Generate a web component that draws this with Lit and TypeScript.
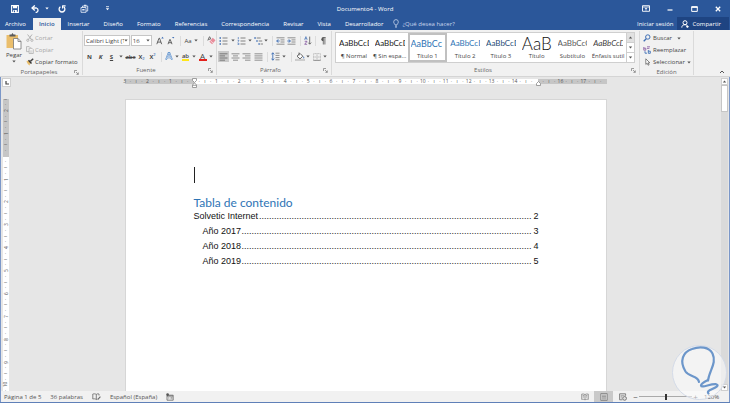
import { LitElement, html, svg, css, TemplateResult, SVGTemplateResult } from "lit";
import { customElement, state } from "lit/decorators.js";
import { classMap } from "lit/directives/class-map.js";

const BLUE = "#2b579a";
const INK = "#444";
const ACCENT = "#3f6fb5";

/** Wraps vector content in a pixel-sized icon. */
const icon = (w: number, h: number, body: SVGTemplateResult): TemplateResult =>
  html`<svg width=${w} height=${h} viewBox="0 0 ${w} ${h}" fill="none" aria-hidden="true">${body}</svg>`;

const caret = icon(4, 3, svg`<path d="M0.3 0.5h3.4L2 2.5z" fill="#555"/>`);

const icons = {
  save: icon(8, 8, svg`<path d="M.6.6h6.8v6.8H.6z" stroke="#fff" stroke-width="1.1"/><path d="M2 .6h4v2.600H2zM2.200 5h3.600v2.400H2.200z" fill="#fff"/><path d="M3 5.600h1v1.600H3z" fill="${BLUE}"/>`),
  undo: icon(9, 8, svg`<path d="M1.400 3h4a2.300 2.300 0 0 1 0 4.400H4.600" stroke="#fff" stroke-width="1.300"/><path d="M3.800.4L1 3l2.800 2.600" stroke="#fff" stroke-width="1.300"/>`),
  redo: icon(8, 8, svg`<path d="M2.400 1.700a2.900 2.900 0 1 0 3.200 0" stroke="#fff" stroke-width="1.300"/><path d="M4.400.8h3.200M4.600.6v3" stroke="#fff" stroke-width="1.200"/>`),
  touch: icon(9, 9, svg`<path d="M1 3.500h5v4.800H1zM2.500 3.500V2h5.200v5H6" stroke="#dfe7f4" stroke-width=".9"/><path d="M4 .8h2.400v1.400H4zM2.200 5h2.400v1.600H2.200z" fill="#dfe7f4"/>`),
  more: icon(5, 5, svg`<path d="M1 .7h3" stroke="#fff" stroke-width=".8"/><path d="M.8 2.200h3.400L2.500 4.200z" fill="#fff"/>`),
  ribbon: icon(8, 7, svg`<path d="M.5.7h7v5.600h-7z" stroke="#fff" stroke-width=".9"/><path d="M.5 2h7" stroke="#fff" stroke-width=".8"/><path d="M4 5.600V3M2.900 4L4 2.900 5.100 4" stroke="#fff" stroke-width=".8"/>`),
  min: icon(6, 6, svg`<path d="M.5 4h5" stroke="#fff" stroke-width="1.200"/>`),
  max: icon(7, 6, svg`<path d="M.7.7h5.600v4.700H.7z" stroke="#fff"/><path d="M.5 1.200h6" stroke="#fff" stroke-width="1.400"/>`),
  close: icon(6, 6, svg`<path d="M.8.8l4.400 4.400M5.200.8L.8 5.200" stroke="#fff" stroke-width="1.300"/>`),
  bulb: icon(6, 9, svg`<path d="M2 6C2 5 .7 4.500.7 2.900a2.300 2.300 0 0 1 4.600 0C5.300 4.500 4 5 4 6zM2 7.200h2M2.300 8.300h1.400" stroke="#c9d6ec" stroke-width=".8"/>`),
  person: icon(8, 8, svg`<circle cx="4" cy="2.700" r="2" stroke="#fff" stroke-width="1"/><path d="M.8 7.600c0-1.800 1.200-2.900 3.200-2.900 1 0 1.600.3 2 .7M5 6.700h2.800M6.400 5.300v2.500" stroke="#fff" stroke-width="1"/>`),
  paste: icon(16, 17, svg`<path d="M.5 2h11.500v13H.5z" fill="#eabe6c"/><path d="M3.500 1.500h2L6.200.3h.6l.7 1.200h2v2h-6z" fill="#5b5b5b"/><path d="M7.500 5.500h4.500l3 3v7.500H7.500z" fill="#fff" stroke="#777" stroke-width=".8"/><path d="M12 5.500v3h3" stroke="#777" stroke-width=".8"/>`),
  cut: icon(8, 8, svg`<path d="M1.600.5l3.800 5M6 .5L2.400 5.500" stroke="#aaa" stroke-width=".9"/><circle cx="1.800" cy="6.300" r="1.100" stroke="#aaa" stroke-width=".8"/><circle cx="5.900" cy="6.300" r="1.100" stroke="#aaa" stroke-width=".8"/>`),
  copy: icon(8, 8, svg`<path d="M.5.6h2.700l1.200 1.200v3.800H.5z" fill="#eee" stroke="#b0b0b0" stroke-width=".8"/><path d="M3.100 2.300h2.900l1.300 1.300v3.900H3.100z" fill="#f6f6f6" stroke="#b0b0b0" stroke-width=".8"/><path d="M4 5h2.300M4 6.200h2.300" stroke="#b8b8b8" stroke-width=".6"/>`),
  brush: icon(8, 8, svg`<path d="M.5 3l2.500-.5 1.700 2.300-1.200 2.700C2.200 6.500 1 5 .5 3z" fill="#eabe6c"/><path d="M2.500 2.200l3 3.300" stroke="#333" stroke-width="1.400"/><path d="M4.300 3.400L7.200.8" stroke="#444" stroke-width="1.500"/>`),
  grow: icon(8, 9, svg`<path d="M.8 8.200L3 2.200h.5l2.200 6M1.600 6.100h3.300" stroke="${INK}" stroke-width=".8"/><path d="M5.300 2.400L6.500.8l1.200 1.600z" fill="${ACCENT}"/>`),
  shrink: icon(8, 9, svg`<path d="M1 8.200l1.800-4.700h.4L5 8.200M1.700 6.700h2.700" stroke="${INK}" stroke-width=".8"/><path d="M5 1h2.400L6.200 2.600z" fill="${ACCENT}"/>`),
  erase: icon(9, 9, svg`<path d="M.8 4.500L2.400.8h.4l1 2.400M1.400 3.300h2" stroke="${INK}" stroke-width=".7"/><path d="M5.700 1.800l2.800 2.500-3.400 3.900-2.700-2.400z" fill="#e88d9b"/><path d="M3.400 4.700l2.700 2.400" stroke="#fff" stroke-width=".6"/>`),
  effect: icon(8, 9, svg`<path d="M1 7.700L3.600.9h.8L7 7.700M2.100 5.500h3.800" stroke="#4f86c6" stroke-width="1.700"/><path d="M1 7.700L3.600.9h.8L7 7.700M2.100 5.500h3.800" stroke="#e9f2fb" stroke-width=".6"/>`),
  bullets: icon(9, 8, svg`<path d="M.5 1h1.500M.5 4h1.500M.5 7h1.500" stroke="${ACCENT}" stroke-width="1.400"/><path d="M3.500 1h5M3.500 4h5M3.500 7h5" stroke="#777" stroke-width=".9"/>`),
  numbers: icon(9, 8, svg`<path d="M1.300.1v1.900M.6 3.200h1.200v.9L.7 5M.6 6.200h1.300v1.500H.6" stroke="${ACCENT}" stroke-width=".7"/><path d="M3.500 1h5M3.500 4h5M3.500 7h5" stroke="#777" stroke-width=".9"/>`),
  levels: icon(9, 8, svg`<path d="M.3 1h1.500M2.300 4h1.400M4.400 7h1.400" stroke="${ACCENT}" stroke-width="1.300"/><path d="M2.700 1h4M4.700 4h3.500M6.600 7H9" stroke="#777" stroke-width=".9"/>`),
  outdent: icon(9, 8, svg`<path d="M.5.8h8M4.500 2.900h4M4.500 5h4M.5 7.200h8" stroke="#777" stroke-width=".8"/><path d="M3.600 4H.8M2.200 2.400L.7 4l1.500 1.600" stroke="${ACCENT}" stroke-width="1"/>`),
  indent: icon(9, 8, svg`<path d="M.5.8h8M4.500 2.900h4M4.500 5h4M.5 7.200h8" stroke="#777" stroke-width=".8"/><path d="M.4 4h2.800M1.900 2.400L3.400 4 1.900 5.600" stroke="${ACCENT}" stroke-width="1"/>`),
  sort: icon(8, 9, svg`<path d="M.6 3.700L1.900.6l1.300 3.100M1 2.800h1.800" stroke="${ACCENT}" stroke-width=".7"/><path d="M.7 5.300h2.300L.7 8.300h2.400" stroke="#8456a0" stroke-width=".8"/><path d="M5.700.6v7.500M4.200 6.600l1.500 1.600 1.500-1.600" stroke="#555" stroke-width=".8"/>`),
  pilcrow: icon(6, 8, svg`<path d="M3.300.5v7M4.900.5v7M2.600.5h3" stroke="#555" stroke-width=".8"/><path d="M3.300.3a1.900 1.900 0 0 0 0 3.900z" fill="#555"/>`),
  alignLeft: icon(9, 8, svg`<path d="M.5.8h8M.5 2.900h5.500M.5 5h8M.5 7.200h5.500" stroke="#666" stroke-width=".8"/>`),
  alignCenter: icon(9, 8, svg`<path d="M.5.8h8M2 2.900h5M.5 5h8M2 7.200h5" stroke="#777" stroke-width=".8"/>`),
  alignRight: icon(9, 8, svg`<path d="M.5.8h8M3 2.900h5.500M.5 5h8M3 7.200h5.500" stroke="#777" stroke-width=".8"/>`),
  justify: icon(9, 8, svg`<path d="M.5.8h8M.5 2.900h8M.5 5h8M.5 7.200h8" stroke="#777" stroke-width=".8"/>`),
  spacing: icon(9, 9, svg`<path d="M1.800.8v7.400M.4 2.400L1.800.8l1.400 1.600M.4 6.600l1.400 1.600 1.400-1.600" stroke="${ACCENT}" stroke-width=".9"/><path d="M4.500 1.200h4M4.500 3.400h4M4.500 5.600h4M4.500 7.800h4" stroke="#777" stroke-width=".8"/>`),
  fill: icon(10, 9, svg`<path d="M2 4.200L5 1.400l2.800 2.800L5 6.900z" fill="#fff" stroke="#555" stroke-width=".9"/><path d="M4 .5v3" stroke="#555" stroke-width=".8"/><path d="M8.700 4.300c.8 1.200.8 2 .1 2.100-.7 0-.7-1-.1-2.100z" fill="${ACCENT}"/><path d="M.5 7.400h9v1.200h-9z" fill="#fff" stroke="#999" stroke-width=".5"/>`),
  borders: icon(8, 8, svg`<path d="M.6.600h6.800v6.800H.6zM4 .6v6.800M.6 4h6.800" stroke="#999" stroke-width=".6" stroke-dasharray="1 .5"/><path d="M.4 7.400h7.200" stroke="#888" stroke-width=".8"/>`),
  find: icon(8, 8, svg`<circle cx="4.800" cy="3" r="2.200" stroke="${ACCENT}" stroke-width="1"/><path d="M3.200 4.700L.7 7.200" stroke="${ACCENT}" stroke-width="1.300"/>`),
  replace: icon(8, 8, svg`<path d="M.8 1v3.200h2v-2h-2M4 .8h3M4 2.400h2.400" stroke="#8456a0" stroke-width=".8"/><path d="M2 5.200v2h2M5.300 4v3.300h2V5.200h-2" stroke="${ACCENT}" stroke-width=".9"/>`),
  select: icon(8, 8, svg`<path d="M2.800.8v5.600l1.400-1.200.9 2 1-.4-.9-2h1.600z" fill="#fff" stroke="#555" stroke-width=".7"/>`),
  launcher: icon(5, 5, svg`<path d="M.5 3V.5H3M2 2l2.200 2.200M4.300 2.400v2H2.400" stroke="#777" stroke-width=".7"/>`),
  collapse: icon(6, 4, svg`<path d="M1 3l2-2 2 2" stroke="#555"/>`),
  proof: icon(9, 8, svg`<path d="M4.300 1.400C3.200.7 2 .7.800 1v5c1.200-.3 2.400-.3 3.500.5zM4.300 1.400C5.300.7 6 .7 7 1v1.500M4.300 6.500l1-.5" stroke="#666" stroke-width=".8"/><path d="M5.300 6.200l2.700-3 .8.700-2.700 3z" fill="#666"/>`),
  macro: icon(8, 8, svg`<path d="M1 2.200h6.200v5H1z" stroke="#666" stroke-width=".8"/><path d="M1 3h6" stroke="#666" stroke-width="1"/><circle cx="1.600" cy="1.600" r="1.300" fill="#555"/><path d="M4.500 4.500h2M4.500 5.700h2M2.300 4.500h1M2.300 5.700h1" stroke="#777" stroke-width=".6"/>`),
  read: icon(8, 8, svg`<path d="M4 1.500C3 .9 1.800.9.700 1.100v5.300C1.800 6.200 3 6.200 4 6.900 5 6.200 6.200 6.200 7.300 6.400V1.100C6.200.9 5 .9 4 1.500zv5.300M1.700 2.600h1.400M1.700 4h1.400M4.900 2.600h1.400M4.900 4h1.400" stroke="#777" stroke-width=".7"/>`),
  print: icon(8, 8, svg`<path d="M.8.6h6.400v6.800H.8z" fill="#ddd" stroke="#777" stroke-width=".8"/><path d="M2 2.200h4M2 3.500h4M2 4.800h4M2 6h4" stroke="#777" stroke-width=".6"/>`),
  web: icon(8, 8, svg`<path d="M3.500 6.800H.6V.8h6v2" stroke="#666" stroke-width=".8"/><path d="M1.600 2.400h4M1.600 3.700h2M1.600 5h1.600" stroke="#777" stroke-width=".6"/><circle cx="5.600" cy="5.400" r="1.900" fill="#ddd" stroke="#555" stroke-width=".7"/>`),
  up: icon(5, 3, svg`<path d="M.8 2.600h3.400L2.500.6z" fill="#555"/>`),
  down: icon(5, 3, svg`<path d="M.8.5h3.400L2.500 2.500z" fill="#555"/>`),
  tabStop: icon(4, 4, svg`<path d="M1 0v3h3" stroke="#444" stroke-width="1.200"/>`),
  knob: icon(5, 10, svg`<path d="M.5.500h4v2L2.500 4.500.5 2.500zM.5 7l2-2.200 2 2.200v2.500h-4zM.5 7.300h4" fill="#fff" stroke="#888" stroke-width=".8"/>`),
  knobEnd: icon(5, 5, svg`<path d="M.5 4.500V2.500l2-2 2 2v2z" fill="#fff" stroke="#888" stroke-width=".8"/>`),
};

interface StyleItem { name: string; kind: string; text: string; }

const STYLES: StyleItem[] = [
  { name: "¶ Normal", kind: "plain", text: "AaBbCcDd" },
  { name: "¶ Sin espa...", kind: "plain", text: "AaBbCcDd" },
  { name: "Título 1", kind: "h1", text: "AaBbCc" },
  { name: "Título 2", kind: "h2", text: "AaBbCcD" },
  { name: "Título 3", kind: "h3", text: "AaBbCcD" },
  { name: "Título", kind: "big", text: "AaB" },
  { name: "Subtítulo", kind: "second", text: "AaBbCcC" },
  { name: "Énfasis sutil", kind: "emph", text: "AaBbCcD" },
];

const TABS = ["Archivo", "Inicio", "Insertar", "Diseño", "Formato", "Referencias", "Correspondencia", "Revisar", "Vista", "Desarrollador"];

const TOC = [
  { text: "Solvetic Internet", page: 2, sub: false, dots: 109 },
  { text: "Año 2017", page: 3, sub: true, dots: 116 },
  { text: "Año 2018", page: 4, sub: true, dots: 116 },
  { text: "Año 2019", page: 5, sub: true, dots: 116 },
];

/** Marks of a ruler, one per quarter of a centimetre; `from` and `to` count quarters. */
function rulerMarks(from: number, to: number, skip: number[]): string[] {
  const marks: string[] = [];
  for (let q = from; q <= to; q++) {
    if (skip.includes(q)) marks.push("");
    else if (q % 4 === 0) marks.push(String(Math.abs(q / 4)));
    else marks.push(q % 2 === 0 ? "ı" : "·");
  }
  return marks;
}

@customElement("app-root")
export class AppRoot extends LitElement {
  @state() private activeStyle = 2;

  static styles = css`
    :host { display: block; height: 100vh; font: 6px/8px "Open Sans", "Noto Sans", sans-serif; color: #444; }
    * { box-sizing: border-box; }
    svg { display: block; flex: none; }
    button, select, input { font: inherit; color: inherit; background: none; border: 0; padding: 0; margin: 0; }
    button { display: flex; align-items: center; justify-content: center; white-space: nowrap; }
    .window { display: flex; flex-direction: column; height: 100%; border-bottom: 1px solid #5f80b8; background: #e6e6e6; overflow: hidden; position: relative; }
    .head { background: #2b579a; color: #fff; }
    .titlebar { display: grid; grid-template-columns: 1fr auto 1fr; align-items: center; height: 17px; }
    .quick { display: flex; align-items: center; padding-left: 3px; }
    .quick button { width: 23px; height: 16px; }
    .quick .undo { width: 18px; }
    .quick .drop { width: 6px; }
    .quick .drop path { fill: #fff; }
    .controls { display: flex; justify-content: flex-end; }
    .controls button { width: 24px; height: 16px; }
    .tabs { display: flex; height: 13px; align-items: stretch; }
    .tab { padding: 0 7px; color: #fff; }
    .tab.file { padding: 0 7px 0 5px; }
    .tab.on { background: #f1f1f1; color: #2b579a; padding: 0 6px; margin-top: 1px; font-weight: 600; }
    .tell { display: flex; align-items: center; gap: 3px; padding-left: 3px; flex: 1; color: #c9d6ec; }
    .tell input { width: 60px; outline: 0; }
    .tell input::placeholder { color: #c9d6ec; opacity: 1; }
    .signin { margin-right: 4px; }
    .share { background: #1e4482; gap: 3px; padding: 0 8px 0 4px; margin-right: 1px; }

    .ribbon { display: flex; height: 47px; background: #f1f1f1; border-bottom: 1px solid #d5d5d5; padding-left: 1px; }
    .group { display: flex; flex-direction: column; border-right: 1px solid #dadada; padding: 1px 0 1px 3px; margin: 1px 0; flex: none; }
    .tools { flex: 1; display: flex; min-width: 0; }
    .group footer { display: flex; align-items: center; height: 8px; color: #666; padding-right: 3px; }
    .group footer span { flex: 1; text-align: center; }
    .clip { width: 82px; }
    .font { width: 134px; padding-left: 1px; }
    .para { width: 115px; padding-left: 1px; }
    .styles { flex: 1; min-width: 0; }
    .edit { width: 54px; }
    .stack { display: flex; flex-direction: column; }
    .stack button { height: 12px; gap: 2px; justify-content: flex-start; }
    .stack .near { gap: 1px; }
    .off { color: #a6a6a6; }
    .paste { flex-direction: column; width: 20px; gap: 1px; justify-content: flex-start; padding-top: 1px; margin-right: 2px; }
    .rows { flex-direction: column; padding-top: 3px; gap: 5px; }
    .row { display: flex; align-items: center; height: 11px; }
    .w6 { width: 6px; } .w8 { width: 8px; } .w9 { width: 9px; } .w11 { width: 11px; } .w12 { width: 12px; }
    .row button { height: 11px; }
    .sep { width: 7px; height: 10px; display: flex; justify-content: center; }
    .sep::before { content: ""; width: 1px; background: #dcdcdc; }
    .combo { display: grid; align-items: center; height: 11px; background: #fff; border: 1px solid #c6c6c6; }
    .combo > * { grid-area: 1 / 1; }
    .combo svg { justify-self: end; margin-right: 1px; pointer-events: none; }
    .combo select { appearance: none; width: 100%; height: 9px; padding: 0 5px 0 1px; outline: 0; white-space: nowrap; overflow: hidden; text-overflow: clip; }
    .family { width: 47px; margin-right: 1px; }
    .size { width: 22px; margin-right: 2px; }
    .b { font-weight: 700; } .i { font-weight: 700; font-style: italic; } .u { font-weight: 700; text-decoration: underline; } .s { text-decoration: line-through; font-weight: 600; }
    .script { font-weight: 600; font-size: 7px; }
    .script sub, .script sup { font-size: 4px; line-height: 4px; color: #3f6fb5; }
    .script sub { padding-top: 4px; } .script sup { padding-bottom: 4px; }
    .mark { border-bottom: 2px solid #ffe61a; line-height: 6px; font-weight: 600; }
    .ink { border-bottom: 2px solid #e3211b; line-height: 7px; font-size: 8px; width: 8px; text-align: center; }
    .press { background: #c9c9c9; }

    .gallery { display: flex; flex: 1; min-width: 0; height: 31px; border: 1px solid #cfcfcf; background: #fff; margin-right: 4px; }
    .cell { flex: 1 1 0; min-width: 0; display: flex; flex-direction: column; align-items: stretch; justify-content: flex-start; padding-top: 3px; border: 0 solid #c0c0c0; }
    .cell.on { border-width: 2px; padding-top: 1px; }
    .sample { height: 15px; overflow: hidden; margin: 0 3px; text-align: left; font: 400 8px/15px "Lato", sans-serif; color: #222; }
    .on .sample { margin: 0 1px; }
    .name { text-align: center; line-height: 8px; margin-top: 1px; }
    .sample.h1 { font-size: 9px; color: #2e74b5; } .h2 { color: #2e74b5; } .h3 { color: #1f4d78; }
    .sample.big { font-size: 17px; font-weight: 300; color: #111; }
    .second { color: #5a5a5a; } .emph { font-style: italic; color: #404040; }
    .scroller { width: 8px; display: flex; flex-direction: column; }
    .scroller button { flex: 1; border-left: 1px solid #cfcfcf; border-bottom: 1px solid #cfcfcf; }
    .scroller button:first-child { background: #e1e1e1; }
    .scroller button:last-child { border-bottom: 0; }
    .rest { flex: none; width: 36px; display: flex; align-items: flex-end; justify-content: flex-end; padding: 0 5px 2px 0; }

    .work { flex: 1; min-height: 0; display: grid; grid-template-columns: 11px 1fr 9px; grid-template-rows: 22px 1fr; border: solid #7b97c8; border-width: 0 1px; }
    .corner { width: 9px; height: 9px; margin: 1px 0 0 1px; background: #fff; border: 1px solid #d0d0d0; display: flex; align-items: center; justify-content: center; }
    .hruler { display: flex; justify-content: center; padding-top: 2px; }
    .marks { display: flex; justify-content: space-between; }
    .marks span { display: flex; justify-content: center; align-items: center; width: 0; height: 0; font: 5px/5px "Open Sans", sans-serif; color: #555; }
    .track { position: relative; width: 68.2%; }
    .across { height: 5px; align-items: center; background: linear-gradient(90deg, #c6c6c6 14.3%, #fff 14.3%, #fff 85.7%, #c6c6c6 85.7%); }
    .knob { position: absolute; left: 14.3%; top: -1px; margin-left: -2px; }
    .knob.end { left: 85.7%; top: 2px; }
    .vruler { display: flex; padding-left: 2px; min-height: 0; }
    .down { flex-direction: column; align-items: center; width: 6px; background: linear-gradient(180deg, #c6c6c6 20%, #fff 20%); }
    .down span b { font-weight: 400; transform: rotate(-90deg); }
    .canvas { display: flex; justify-content: center; min-height: 0; overflow: hidden; }
    .sheet { width: 68.2%; background: #fff; border: 1px solid #d6d6d6; border-bottom: 0; padding: 67px 9.6% 0; }
    .cursor { width: 1px; height: 16px; background: #222; }
    h1 { margin: 11px 0 0; font: 400 12px/17px "Lato", sans-serif; color: #2e74b5; }
    .toc { list-style: none; margin: 0; padding: 0; font: 9px/11px "Liberation Sans", Arial, sans-serif; color: #111; }
    .toc li { display: flex; margin-bottom: 4px; }
    .toc .indent { padding-left: 9px; }
    .dots { flex: 1; min-width: 0; overflow: hidden; white-space: nowrap; padding-right: 2px; text-align: right; }
    .vscroll { grid-column: 3; grid-row: 1 / 3; display: flex; flex-direction: column; background: #dadada; margin: 1px 1px 0 1px; }
    .vscroll button { height: 7px; background: #fff; border: 1px solid #cfcfcf; }
    .thumb { height: 27px; background: #fff; border: 1px solid #c6c6c6; }
    .gap { flex: 1; }

    .status { display: flex; align-items: center; height: 11px; background: #f1f1f1; border: solid #7b97c8; border-width: 0 1px; padding: 0 10px 0 3px; color: #555; white-space: nowrap; }
    .status .left { display: flex; align-items: center; gap: 9px; flex: 1; }
    .status .view { width: 19px; height: 11px; }
    .status .zoom { width: 7px; height: 11px; font-size: 8px; }
    .status output { margin-left: 5px; width: 15px; }
    .range { appearance: none; width: 53px; height: 8px; background: linear-gradient(#aaa, #aaa) center / 100% 1px no-repeat; }
    .range::-webkit-slider-thumb { appearance: none; width: 2px; height: 6px; background: #333; }
    .badge { position: absolute; right: 3px; bottom: 2px; width: 55px; height: 55px; pointer-events: none; }
  `;

  private sample(s: StyleItem, i: number) {
    return html`<button class=${classMap({ cell: true, on: i === this.activeStyle })} @click=${() => (this.activeStyle = i)}>
      <span class="sample ${s.kind}">${s.text}</span><span class="name">${s.name}</span>
    </button>`;
  }

  private drop(width = "w8") {
    return html`<button class=${width} aria-label="Más opciones">${caret}</button>`;
  }

  private groupFoot(label: string, launcher = true) {
    return html`<footer><span>${label}</span>${launcher ? html`<button aria-label="Opciones de ${label}">${icons.launcher}</button>` : ""}</footer>`;
  }

  private header() {
    return html`<header class="head">
      <div class="titlebar">
        <div class="quick">
          <button aria-label="Guardar">${icons.save}</button>
          <button class="undo" aria-label="Deshacer">${icons.undo}</button>
          <button class="drop" aria-label="Historial">${caret}</button>
          <button aria-label="Rehacer">${icons.redo}</button>
          <button aria-label="Modo táctil">${icons.touch}</button>
          <button aria-label="Personalizar">${icons.more}</button>
        </div>
        <div>Documento4 - Word</div>
        <div class="controls">
          <button aria-label="Presentación de la cinta">${icons.ribbon}</button>
          <button aria-label="Minimizar">${icons.min}</button>
          <button aria-label="Maximizar">${icons.max}</button>
          <button aria-label="Cerrar">${icons.close}</button>
        </div>
      </div>
      <nav class="tabs">
        ${TABS.map((t, i) => html`<button class=${classMap({ tab: true, file: i === 0, on: i === 1 })}>${t}</button>`)}
        <label class="tell">${icons.bulb}<input placeholder="¿Qué desea hacer?" aria-label="¿Qué desea hacer?"></label>
        <button class="signin">Iniciar sesión</button>
        <button class="share">${icons.person}Compartir</button>
      </nav>
    </header>`;
  }

  private ribbon() {
    const sep = html`<span class="sep"></span>`;
    return html`<section class="ribbon">
      <div class="group clip">
        <div class="tools">
          <button class="paste">${icons.paste}<span>Pegar</span>${caret}</button>
          <div class="stack">
            <button class="near off">${icons.cut}Cortar</button>
            <button class="near off">${icons.copy}Copiar</button>
            <button class="near">${icons.brush}Copiar formato</button>
          </div>
        </div>
        ${this.groupFoot("Portapapeles")}
      </div>
      <div class="group font">
        <div class="tools rows">
          <div class="row">
            <span class="combo family"><select aria-label="Fuente"><option>Calibri Light (Títulos)</option></select>${caret}</span>
            <span class="combo size"><select aria-label="Tamaño"><option>16</option></select>${caret}</span>
            <button class="w12" aria-label="Agrandar">${icons.grow}</button>
            <button class="w11" aria-label="Reducir">${icons.shrink}</button>
            ${sep}
            <button class="w9">Aa</button>${this.drop()}
            ${sep}
            <button class="w9" aria-label="Borrar formato">${icons.erase}</button>
          </div>
          <div class="row">
            <button class="w11 b">N</button><button class="w11 i">K</button><button class="w11 u">S</button>${this.drop()}
            <button class="w11 s">abc</button>
            <button class="w11 script">x<sub>2</sub></button>
            <button class="w11 script">x<sup>2</sup></button>
            ${sep}
            <button class="w8" aria-label="Efectos">${icons.effect}</button>${this.drop()}
            <button class="w9" aria-label="Resaltar"><span class="mark">ab</span></button>${this.drop()}
            <button class="w9" aria-label="Color"><span class="ink">A</span></button>${this.drop()}
          </div>
        </div>
        ${this.groupFoot("Fuente")}
      </div>
      <div class="group para">
        <div class="tools rows">
          <div class="row">
            <button class="w11" aria-label="Viñetas">${icons.bullets}</button>${this.drop()}
            <button class="w9" aria-label="Numeración">${icons.numbers}</button>${this.drop()}
            <button class="w9" aria-label="Multinivel">${icons.levels}</button>${this.drop("w6")}
            ${sep}
            <button class="w9" aria-label="Disminuir sangría">${icons.outdent}</button>
            <button class="w12" aria-label="Aumentar sangría">${icons.indent}</button>
            ${sep}
            <button class="w8" aria-label="Ordenar">${icons.sort}</button>
            ${sep}
            <button class="w8" aria-label="Mostrar todo">${icons.pilcrow}</button>
          </div>
          <div class="row">
            <button class="w11 press" aria-label="Izquierda">${icons.alignLeft}</button>
            <button class="w12" aria-label="Centrar">${icons.alignCenter}</button>
            <button class="w11" aria-label="Derecha">${icons.alignRight}</button>
            <button class="w12" aria-label="Justificar">${icons.justify}</button>
            ${sep}
            <button class="w9" aria-label="Interlineado">${icons.spacing}</button>${this.drop()}
            ${sep}
            <button class="w9" aria-label="Sombreado">${icons.fill}</button>${this.drop()}
            <button class="w9" aria-label="Bordes">${icons.borders}</button>${this.drop()}
          </div>
        </div>
        ${this.groupFoot("Párrafo")}
      </div>
      <div class="group styles">
        <div class="tools">
          <div class="gallery">
            ${STYLES.map((s, i) => this.sample(s, i))}
            <div class="scroller">
              <button aria-label="Subir">${icons.up}</button>
              <button aria-label="Bajar">${icons.down}</button>
              <button aria-label="Más estilos">${icons.down}</button>
            </div>
          </div>
        </div>
        ${this.groupFoot("Estilos")}
      </div>
      <div class="group edit">
        <div class="tools">
          <div class="stack">
            <button>${icons.find}Buscar&nbsp;&nbsp;${caret}</button>
            <button>${icons.replace}Reemplazar</button>
            <button>${icons.select}Seleccionar${caret}</button>
          </div>
        </div>
        ${this.groupFoot("Edición", false)}
      </div>
      <div class="rest"><button aria-label="Contraer cinta">${icons.collapse}</button></div>
    </section>`;
  }

  render() {
    return html`<div class="window">
      ${this.header()}
      ${this.ribbon()}
      <main class="work">
        <div class="corner">${icons.tabStop}</div>
        <div class="hruler">
          <div class="track">
            <div class="marks across">
              ${rulerMarks(-12, 72, [0, 60, 72]).map((m) => html`<span>${m}</span>`)}
            </div>
            <div class="knob">${icons.knob}</div>
            <div class="knob end">${icons.knobEnd}</div>
          </div>
        </div>
        <div class="vruler">
          <div class="marks down">
            ${rulerMarks(-10, 41, [0]).map((m) => html`<span><b>${m}</b></span>`)}
          </div>
        </div>
        <div class="canvas">
          <article class="sheet">
            <div class="cursor"></div>
            <h1>Tabla de contenido</h1>
            <ol class="toc">
              ${TOC.map((e) => html`<li class=${classMap({ indent: e.sub })}>
                <span>${e.text}</span><span class="dots">${".".repeat(e.dots)}</span><span>${e.page}</span>
              </li>`)}
            </ol>
          </article>
        </div>
        <div class="vscroll">
          <button aria-label="Subir">${icons.up}</button>
          <div class="thumb"></div>
          <div class="gap"></div>
          <button aria-label="Bajar">${icons.down}</button>
        </div>
      </main>
      <footer class="status">
        <div class="left">
          <span>Página 1 de 5</span><span>36 palabras</span>${icons.proof}<span>Español (España)</span>${icons.macro}
        </div>
        <button class="view" aria-label="Modo de lectura">${icons.read}</button>
        <button class="view press" aria-label="Diseño de impresión">${icons.print}</button>
        <button class="view" aria-label="Diseño web">${icons.web}</button>
        <button class="zoom" aria-label="Alejar">−</button>
        <input class="range" type="range" min="0" max="100" value="50" aria-label="Zoom">
        <button class="zoom" aria-label="Acercar">+</button>
        <output>120%</output>
      </footer>
      <div class="badge">${icon(55, 55, svg`<circle cx="27.500" cy="27.500" r="27" fill="#fff" fill-opacity=".5" stroke="#d4dbe8" stroke-width="1"/><path d="M27 37C26 30.500 17.500 32.500 13.500 26.500 7 16 11 7 20 4c8-3 17-2 20.500 4.500C45 18 37.500 25 36 35.500" stroke="#6c96ca" stroke-width="2.200" stroke-linecap="round"/><path d="M36 35c-1 .5-7 3.500-7 5.500.5 3 9.500-2 15-1.300 5 1.300-3 4.300-6 5.800-2.500 1.300-2.500 2.500-1.500 3.500" stroke="#6c96ca" stroke-width="2.200" stroke-linecap="round"/>`)}</div>
    </div>`;
  }
}
